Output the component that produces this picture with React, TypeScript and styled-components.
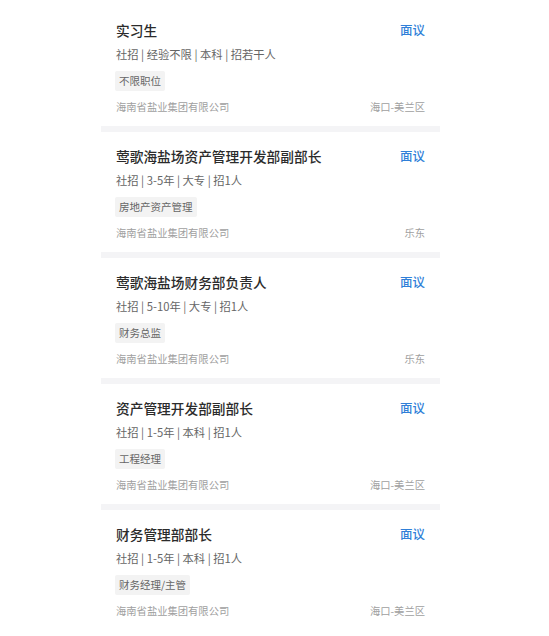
import React from "react";
import styled, { createGlobalStyle } from "styled-components";

const Global = createGlobalStyle`
  html, body { margin: 0; padding: 0; background: #ffffff; }
  body { font-family: "Noto Sans CJK SC", "Noto Sans", sans-serif; }
`;

const List = styled.div`
  width: 339px;
  margin-left: 101px;
  padding-top: 6px;
  display: flex;
  flex-direction: column;
`;

const Card = styled.div`
  padding: 14px 15px 9px 15px;
  border-bottom: 6px solid #f4f4f6;
  display: flex;
  flex-direction: column;
  &:last-child { border-bottom-color: transparent; }
`;

const Row = styled.div`
  display: flex;
  justify-content: space-between;
  align-items: center;
`;

const Title = styled.div`
  font-size: 13.7px;
  line-height: 20px;
  font-weight: 500;
  color: #2b2b2b;
`;

const Salary = styled.div`
  font-size: 12.5px;
  line-height: 20px;
  font-weight: 500;
  color: #2f7fd8;
`;

const Meta = styled.div`
  margin-top: 4px;
  font-size: 11.3px;
  line-height: 20px;
  color: #666666;
`;

const Tags = styled.div`
  margin-top: 7px;
  display: flex;
  gap: 6px;
`;

const Tag = styled.span`
  display: inline-block;
  height: 20px;
  line-height: 20px;
  padding: 0 4px;
  margin-left: -1px;
  font-size: 10.5px;
  color: #666666;
  background: #f3f3f3;
  border-radius: 2px;
`;

const Footer = styled(Row)`
  margin-top: 6px;
`;

const Small = styled.div`
  font-size: 10.3px;
  line-height: 20px;
  color: #a0a0a0;
`;

type Job = {
  title: string;
  meta: string[];
  tag: string;
  company: string;
  place: string;
};

const jobs: Job[] = [
  { title: "实习生", meta: ["社招", "经验不限", "本科", "招若干人"], tag: "不限职位", company: "海南省盐业集团有限公司", place: "海口-美兰区" },
  { title: "莺歌海盐场资产管理开发部副部长", meta: ["社招", "3-5年", "大专", "招1人"], tag: "房地产资产管理", company: "海南省盐业集团有限公司", place: "乐东" },
  { title: "莺歌海盐场财务部负责人", meta: ["社招", "5-10年", "大专", "招1人"], tag: "财务总监", company: "海南省盐业集团有限公司", place: "乐东" },
  { title: "资产管理开发部副部长", meta: ["社招", "1-5年", "本科", "招1人"], tag: "工程经理", company: "海南省盐业集团有限公司", place: "海口-美兰区" },
  { title: "财务管理部部长", meta: ["社招", "1-5年", "本科", "招1人"], tag: "财务经理/主管", company: "海南省盐业集团有限公司", place: "海口-美兰区" },
];

export default function App() {
  return (
    <>
      <Global />
      <List>
        {jobs.map((j, i) => (
          <Card key={i}>
            <Row>
              <Title>{j.title}</Title>
              <Salary>面议</Salary>
            </Row>
            <Meta>{j.meta.join(" | ")}</Meta>
            <Tags>
              <Tag>{j.tag}</Tag>
            </Tags>
            <Footer>
              <Small>{j.company}</Small>
              <Small>{j.place}</Small>
            </Footer>
          </Card>
        ))}
      </List>
    </>
  );
}
